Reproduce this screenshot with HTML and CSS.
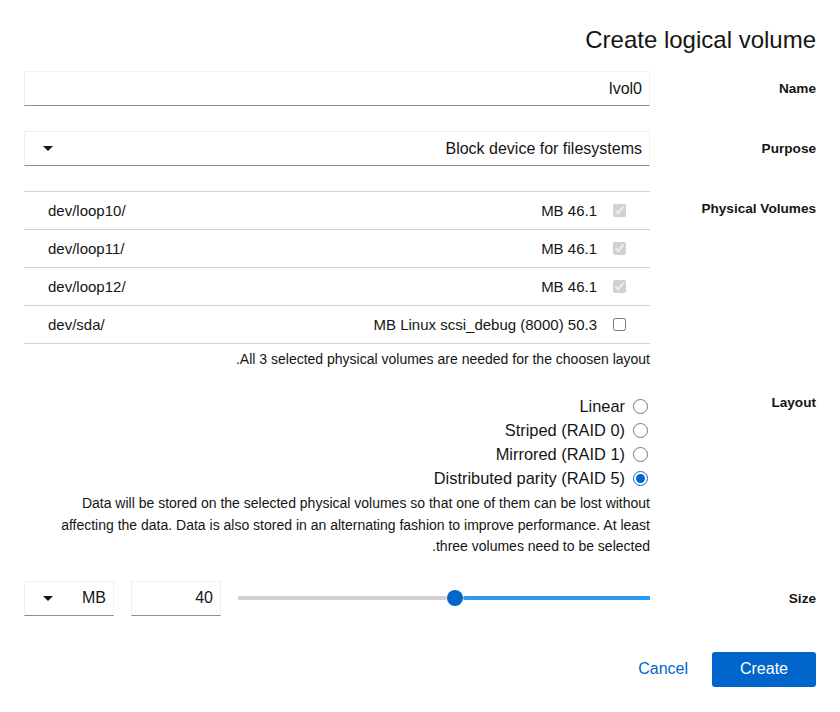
FILE: index.html
```html
<!DOCTYPE html>
<html lang="en" dir="rtl">
<head>
<meta charset="utf-8">
<title>Create logical volume</title>
<link rel="stylesheet" href="styles.css">
</head>
<body>
<div class="dialog">
  <h1 class="title">Create logical volume</h1>
  <div class="form">
    <div class="label">Name</div>
    <div class="field">
      <div class="input"><span class="ltr">lvol0</span></div>
    </div>

    <div class="label">Purpose</div>
    <div class="field">
      <div class="input select">
        <span class="ltr">Block device for filesystems</span>
        <span class="caret"></span>
      </div>
    </div>

    <div class="label pv-label">Physical Volumes</div>
    <div class="field">
      <ul class="pv-list">
        <li class="pv-row">
          <input type="checkbox" class="cb" checked disabled>
          <span class="ltr pv-size">MB 46.1</span>
          <span class="ltr pv-name">dev/loop10/</span>
        </li>
        <li class="pv-row">
          <input type="checkbox" class="cb" checked disabled>
          <span class="ltr pv-size">MB 46.1</span>
          <span class="ltr pv-name">dev/loop11/</span>
        </li>
        <li class="pv-row">
          <input type="checkbox" class="cb" checked disabled>
          <span class="ltr pv-size">MB 46.1</span>
          <span class="ltr pv-name">dev/loop12/</span>
        </li>
        <li class="pv-row">
          <input type="checkbox" class="cb">
          <span class="ltr pv-size">MB Linux scsi_debug (8000) 50.3</span>
          <span class="ltr pv-name">dev/sda/</span>
        </li>
      </ul>
      <div class="helper"><span class="ltr">.All 3 selected physical volumes are needed for the choosen layout</span></div>
    </div>

    <div class="label layout-label">Layout</div>
    <div class="field layout-field">
      <label class="radio"><input type="radio" name="layout"><span class="ltr">Linear</span></label>
      <label class="radio"><input type="radio" name="layout"><span class="ltr">Striped (RAID 0)</span></label>
      <label class="radio"><input type="radio" name="layout"><span class="ltr">Mirrored (RAID 1)</span></label>
      <label class="radio"><input type="radio" name="layout" checked><span class="ltr">Distributed parity (RAID 5)</span></label>
      <p class="desc"><span class="ltr">Data will be stored on the selected physical volumes so that one of them can be lost without</span><br><span class="ltr">affecting the data. Data is also stored in an alternating fashion to improve performance. At least</span><br><span class="ltr">.three volumes need to be selected</span></p>
    </div>

    <div class="label size-label">Size</div>
    <div class="field size-field">
      <div class="slider">
        <div class="track-fill"></div>
        <div class="thumb"></div>
        <div class="track-empty"></div>
      </div>
      <div class="input num"><span class="ltr">40</span></div>
      <div class="input unit"><span class="ltr">MB</span><span class="caret"></span></div>
    </div>
  </div>
  <div class="footer">
    <button class="btn primary">Create</button>
    <button class="btn link">Cancel</button>
  </div>
</div>
</body>
</html>
```
FILE: styles.css
```css
* { box-sizing: border-box; }
html, body { margin: 0; padding: 0; background: #fff; }
body {
  font-family: "Liberation Sans", Arial, sans-serif;
  color: #151515;
  font-size: 15px;
}
.dialog {
  width: 840px;
  padding: 24px 24px 0 24px;
}
.ltr { direction: ltr; unicode-bidi: isolate; }
.title {
  margin: 0 0 16px 0;
  font-size: 24px;
  font-weight: normal;
  line-height: 31px;
  height: 31px;
}
.form {
  display: grid;
  grid-template-columns: 150px 626px;
  column-gap: 16px;
  row-gap: 25px;
}
.label {
  font-weight: bold;
  font-size: 13.6px;
  line-height: 20px;
  padding-top: 8px;
}
.input {
  display: flex;
  align-items: center;
  height: 35px;
  padding: 0 7px;
  border: 1px solid #f0f0f0;
  border-bottom-color: #8a8d90;
  font-size: 16px;
}
.select { justify-content: space-between; padding-left: 18px; }
.caret {
  width: 0; height: 0;
  border-left: 5px solid transparent;
  border-right: 5px solid transparent;
  border-top: 5px solid #151515;
}
.pv-list {
  list-style: none;
  margin: 0;
  padding: 0;
  border-top: 1px solid #d2d2d2;
}
.pv-row {
  display: flex;
  align-items: center;
  height: 38px;
  padding: 0 24px;
  border-bottom: 1px solid #d2d2d2;
  font-size: 15px;
}
.cb {
  margin: 0 0 0 16px;
  width: 13px;
  height: 13px;
}
.pv-name { margin-right: auto; }
.helper {
  font-size: 14px;
  line-height: 20px;
  padding-top: 5px;
}
.pv-label { padding-top: 8px; }
.layout-label { padding-top: 0; margin-top: -1px; }
.layout-field { display: flex; flex-direction: column; }
.radio {
  display: flex;
  align-items: center;
  height: 24px;
  font-size: 16.4px;
  padding-right: 2px;
}
.radio input {
  margin: 0 0 0 8px;
  width: 15px;
  height: 15px;
  accent-color: #06c;
}
.desc {
  margin: 3px 0 0 0;
  font-size: 14px;
  line-height: 21.5px;
}
.size-label { padding-top: 6px; }
.size-field {
  display: flex;
  align-items: center;
  gap: 17px;
  margin-top: -2px;
}
.slider {
  flex: 1;
  display: flex;
  align-items: center;
  height: 35px;
}
.track-fill {
  width: 187px;
  height: 4px;
  background: #2b9af3;
  border-radius: 2px 0 0 2px;
}
.thumb {
  width: 16px;
  height: 16px;
  border-radius: 50%;
  background: #06c;
}
.track-empty {
  flex: 1;
  height: 4px;
  background: #d2d2d2;
  border-radius: 0 2px 2px 0;
}
.num { width: 90px; }
.unit { width: 90px; justify-content: space-between; padding-left: 18px; }
.footer {
  display: flex;
  align-items: center;
  gap: 24px;
  margin-top: 36px;
}
.btn {
  font-family: inherit;
  font-size: 16px;
  border: none;
  cursor: pointer;
}
.primary {
  background: #06c;
  color: #fff;
  height: 35px;
  width: 104px;
  border-radius: 3px;
}
.link {
  background: none;
  color: #06c;
  padding: 0;
}
```
